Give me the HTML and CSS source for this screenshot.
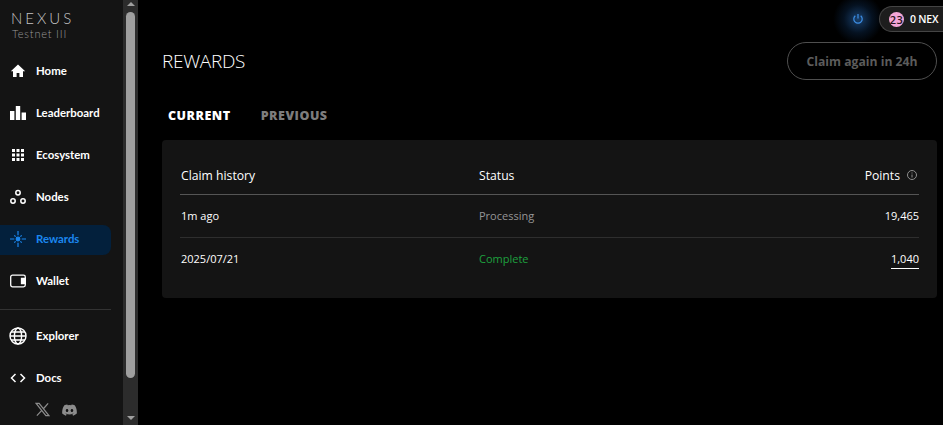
FILE: index.html
```html
<!DOCTYPE html>
<html lang="en">

<head>
  <meta charset="UTF-8" />
  <meta name="viewport" content="width=device-width, initial-scale=1.0" />
  <title>Rewards</title>
  <link rel="stylesheet" href="styles.css">
</head>

<body>
  <div class="app">
    <aside class="sidebar">
      <div class="brand">
        <div class="brand-name">NEXUS</div>
        <div class="brand-sub">Testnet III</div>
      </div>

      <nav class="nav">
        <a class="nav-item">
          <svg class="nav-icon" viewBox="0 0 16 16"><path fill="#fff" d="M8 1.500 0.800 8.200h2.200V14h3.600v-4h2.800v4H13V8.200h2.200z" /></svg>
          Home
        </a>
        <a class="nav-item">
          <svg class="nav-icon" viewBox="0 0 16 16"><path fill="#fff" d="M0 6h4.400v9H0zM5.800 1h4.400v14H5.800zM11.600 7.500H16V15h-4.400z" /></svg>
          Leaderboard
        </a>
        <a class="nav-item">
          <svg class="nav-icon" viewBox="0 0 16 16"><path fill="#fff" d="M2 2h3v3H2zM6.500 2h3v3h-3zM11 2h3v3h-3zM2 6.500h3v3H2zM6.500 6.500h3v3h-3zM11 6.500h3v3h-3zM2 11h3v3H2zM6.500 11h3v3h-3zM11 11h3v3h-3z" /></svg>
          Ecosystem
        </a>
        <a class="nav-item">
          <svg class="nav-icon" viewBox="0 0 16 16" fill="none" stroke="#fff" stroke-width="1.500"><circle cx="8" cy="3.700" r="2.200" /><circle cx="3" cy="12" r="2.200" /><circle cx="13" cy="12" r="2.200" /></svg>
          Nodes
        </a>
        <a class="nav-item active">
          <svg class="nav-icon" viewBox="0 0 16 16" fill="none" stroke="#1b87f0" stroke-width="1.200"><circle cx="8" cy="8" r="1.800" fill="#1b87f0" /><path d="M8 0v4.300M8 11.700V16M0 8h4.300M11.700 8H16M4.300 4.300l1.300 1.300M10.400 10.400l1.300 1.300M11.700 4.300l-1.300 1.300M5.600 10.400l-1.300 1.300" /></svg>
          Rewards
        </a>
        <a class="nav-item">
          <svg class="nav-icon" viewBox="0 0 16 16" fill="none" stroke="#fff" stroke-width="1.300"><rect x="0.700" y="2.200" width="14.600" height="11.600" rx="1.800" /><path fill="#fff" d="M11.500 5.500h3.800v5h-3.800z" /></svg>
          Wallet
        </a>
        <div class="nav-divider"></div>
        <a class="nav-item">
          <svg class="nav-icon globe" viewBox="0 0 18 18" fill="none" stroke="#fff" stroke-width="1.400"><circle cx="9" cy="9" r="8" /><ellipse cx="9" cy="9" rx="3.600" ry="8" /><path d="M1 9h16M2 5h14M2 13h14" /></svg>
          Explorer
        </a>
        <a class="nav-item">
          <svg class="nav-icon" viewBox="0 0 16 16" fill="none" stroke="#fff" stroke-width="1.500"><path d="M5.500 4 1.500 8l4 4M10.500 4l4 4-4 4" /></svg>
          Docs
        </a>
      </nav>

      <div class="socials">
        <svg class="social-x" viewBox="0 0 16 16" fill="none" stroke="#8c8c8c" stroke-width="1.300"><path d="M1.200 1.500h3.200l10.400 13h-3.200zM14 1.500 9 7.200M7 9.200l-5 5.300" /></svg>
        <svg class="social-discord" viewBox="0 0 16 12"><path fill="#8c8c8c" d="M13.500 1A13 13 0 0 0 10.300 0l-.4.800a12 12 0 0 0-3.800 0L5.700 0A13 13 0 0 0 2.500 1C.5 4 0 6.900.2 9.800A13 13 0 0 0 4.200 12l.8-1.300-1.300-.6.300-.3a9 9 0 0 0 8 0l.3.300-1.300.6.800 1.300a13 13 0 0 0 4-2.200c.3-3.400-.5-6.300-2.300-8.800zM5.400 8.200c-.8 0-1.400-.7-1.400-1.600S4.600 5 5.400 5s1.400.7 1.400 1.600-.6 1.600-1.400 1.600zm5.200 0c-.8 0-1.400-.7-1.400-1.600S9.800 5 10.600 5 12 5.700 12 6.600s-.6 1.600-1.400 1.600z" /></svg>
      </div>
    </aside>

    <div class="scrollbar">
      <div class="scroll-arrow up"></div>
      <div class="scroll-thumb"></div>
      <div class="scroll-arrow down"></div>
    </div>

    <main class="main">
      <div class="topbar">
        <div class="power">
          <svg viewBox="0 0 12 12" fill="none" stroke="#3d8fe6" stroke-width="1.200"><path d="M6 1v4.500M3.300 2.800a4.200 4.200 0 1 0 5.400 0" /></svg>
        </div>
        <div class="balance">
          <span class="avatar">23</span>
          <span>0 NEX</span>
        </div>
      </div>

      <div class="title-row">
        <h1>REWARDS</h1>
        <button class="claim" disabled>Claim again in 24h</button>
      </div>

      <div class="tabs">
        <span class="tab current">CURRENT</span>
        <span class="tab">PREVIOUS</span>
      </div>

      <section class="card">
        <div class="row head">
          <span>Claim history</span>
          <span>Status</span>
          <span class="points">
            Points
            <svg class="info" viewBox="0 0 12 12" fill="none" stroke="#8f8f8f"><circle cx="6" cy="6" r="4.500" /><path d="M6 5.500v3M6 3.500v1" /></svg>
          </span>
        </div>
        <div class="row">
          <span>1m ago</span>
          <span class="processing">Processing</span>
          <span class="points">19,465</span>
        </div>
        <div class="row last">
          <span>2025/07/21</span>
          <span class="complete">Complete</span>
          <span class="points"><span class="link">1,040</span></span>
        </div>
      </section>
    </main>
  </div>
</body>

</html>
```

FILE: styles.css
```css
* {
  box-sizing: border-box;
}

html,
body {
  height: 100%;
}

body {
  margin: 0;
  background: #000;
  color: #fff;
  font-family: "Open Sans", "Liberation Sans", sans-serif;
  overflow: hidden;
}

.app {
  display: flex;
  height: 425px;
}

/* Sidebar */
.sidebar {
  width: 123px;
  flex: none;
  background: #141414;
  font-family: Lato, "Liberation Sans", sans-serif;
}

.brand {
  height: 49px;
  padding: 10px 0 0 11px;
}

.brand-name {
  font-size: 15px;
  font-weight: 300;
  line-height: 17px;
  letter-spacing: 3px;
  color: #c4c4c4;
}

.brand-sub {
  padding-left: 1px;
  font-size: 11px;
  font-weight: 300;
  line-height: 14px;
  letter-spacing: 0.8px;
  color: #9a9a9a;
}

.nav {
  width: 111px;
}

.nav-item {
  display: flex;
  align-items: center;
  gap: 10px;
  height: 42px;
  padding-left: 10px;
  font-size: 11.400px;
  font-weight: 700;
  color: #fff;
  position: relative;
}

.nav-icon {
  width: 16px;
  height: 16px;
  margin-top: 2px;
  flex: none;
}

.nav-icon.globe {
  width: 18px;
  height: 18px;
  margin: 2px -1px 0;
}

.nav-item.active {
  color: #1b87f0;
  isolation: isolate;
}

.nav-item.active::before {
  content: "";
  position: absolute;
  inset: 8px 0 4px;
  background: #03203c;
  border-radius: 0 8px 8px 0;
  z-index: -1;
}

.nav-divider {
  height: 1px;
  margin: 8px 0 4px;
  background: #333;
}

.socials {
  display: flex;
  align-items: center;
  gap: 12px;
  padding: 4px 0 0 35px;
}

.social-x {
  width: 15px;
  height: 15px;
}

.social-discord {
  width: 15px;
  height: 12px;
}

/* Fake window scrollbar */
.scrollbar {
  width: 15px;
  flex: none;
  display: flex;
  flex-direction: column;
  align-items: center;
  background: #2c2c2c;
}

.scroll-arrow {
  width: 0;
  height: 0;
  flex: none;
  border-left: 4px solid transparent;
  border-right: 4px solid transparent;
}

.scroll-arrow.up {
  margin-top: 2px;
  border-bottom: 4px solid #a0a0a0;
}

.scroll-arrow.down {
  margin-top: 38px;
  border-top: 4px solid #a0a0a0;
}

.scroll-thumb {
  width: 9px;
  height: 366px;
  margin-top: 6px;
  border-radius: 5px;
  background: #9f9f9f;
}

/* Main area */
.main {
  flex: 1;
  min-width: 0;
  padding: 6px 6px 0 24px;
}

.topbar {
  display: flex;
  justify-content: flex-end;
  align-items: center;
  height: 26px;
  margin-right: -6px;
}

.power {
  width: 50px;
  height: 50px;
  margin-right: -4px;
  display: flex;
  align-items: center;
  justify-content: center;
  background: radial-gradient(circle, rgba(45, 115, 195, 0.55) 0, rgba(20, 70, 130, 0.25) 40%, transparent 70%);
}

.power svg {
  width: 12px;
  height: 12px;
}

.balance {
  width: 64px;
  height: 26px;
  display: flex;
  align-items: center;
  gap: 6px;
  padding-left: 9px;
  background: #1d1d1d;
  border: 1px solid #444;
  border-right: 0;
  border-radius: 13px 0 0 13px;
  font-size: 10.500px;
  font-weight: 600;
  letter-spacing: -0.2px;
  white-space: nowrap;
}

.avatar {
  width: 15px;
  height: 15px;
  flex: none;
  border-radius: 50%;
  background: #f4a6d7;
  color: #2a1420;
  font-size: 11px;
  line-height: 15px;
  text-align: center;
  letter-spacing: 0.5px;
}

.title-row {
  display: flex;
  justify-content: space-between;
  align-items: center;
  margin-top: 10px;
  height: 38px;
}

h1 {
  margin: 0;
  font-size: 19px;
  font-weight: 300;
  letter-spacing: -0.3px;
}

.claim {
  width: 150px;
  height: 38px;
  padding: 0;
  background: transparent;
  border: 1px solid #4f4f4f;
  border-radius: 19px;
  color: #5c5c5c;
  font-family: inherit;
  font-size: 12.200px;
  font-weight: 700;
}

.tabs {
  display: flex;
  gap: 30px;
  height: 60px;
  padding: 27px 0 0 6px;
}

.tab {
  font-size: 12.500px;
  font-weight: 800;
  line-height: 18px;
  letter-spacing: 0.5px;
  color: #7d7d7d;
}

.tab.current {
  color: #fff;
}

.card {
  height: 158px;
  padding: 12px 18px 0;
  background: #141414;
  border-radius: 4px;
}

.row {
  display: grid;
  grid-template-columns: 299px 1fr auto;
  align-items: center;
  height: 43px;
  padding-bottom: 1px;
  border-bottom: 1px solid #2e2e2e;
  font-size: 11px;
  font-weight: 500;
}

.row > span:first-child {
  padding-left: 1px;
}

.row.head {
  padding: 4px 0 0;
  font-size: 12.200px;
  border-bottom-color: #555;
}

.row.last {
  padding-bottom: 2px;
  border-bottom: 0;
}

.processing {
  color: #969696;
}

.complete {
  color: #1ea13f;
}

.points {
  display: flex;
  align-items: center;
  justify-content: flex-end;
  gap: 6px;
}

.info {
  width: 12px;
  height: 12px;
  margin-right: 1px;
}

.link {
  border-bottom: 1px solid #fff;
  padding-bottom: 2px;
  margin-bottom: -3px;
}
```
